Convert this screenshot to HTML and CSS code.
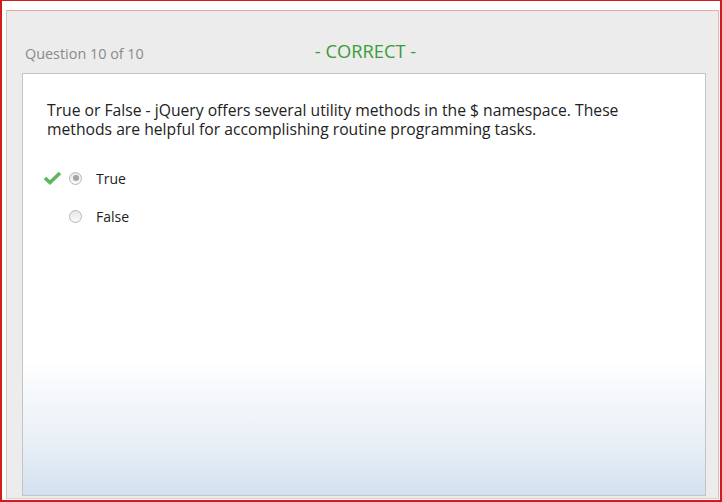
FILE: index.html
```html
<!DOCTYPE html>
<html>
<head>
<meta charset="utf-8">
<link rel="stylesheet" href="styles.css">
</head>
<body>
<div class="frame">
  <div class="panel">
    <div class="header">
      <span class="qnum">Question 10 of 10</span>
      <span class="result">- CORRECT -</span>
      <span></span>
    </div>
    <div class="card">
      <p class="question">True or False - jQuery offers several utility methods in the $ namespace. These methods are helpful for accomplishing routine programming tasks.</p>
      <div class="options">
        <div class="option">
          <svg class="check" width="19" height="14" viewBox="0 0 19 14"><path d="M2 7 L7 11.5 L17 2" fill="none" stroke="#5cb85c" stroke-width="3.6" stroke-linejoin="miter"/></svg>
          <span class="radio selected"></span>
          <span class="label">True</span>
        </div>
        <div class="option">
          <span class="check-slot"></span>
          <span class="radio"></span>
          <span class="label">False</span>
        </div>
      </div>
    </div>
  </div>
</div>
</body>
</html>
```
FILE: styles.css
```css
* { box-sizing: border-box; }
html, body { margin: 0; padding: 0; }
body { width: 722px; height: 502px; overflow: hidden; font-family: "Open Sans", "Noto Sans", sans-serif; }
.frame {
  width: 722px; height: 502px;
  background: #fff;
  border-top: 1px solid #d01c1c;
  border-left: 2px solid #d01c1c;
  border-right: 2px solid #d01c1c;
  border-bottom: 2px solid #d01c1c;
  padding: 9px 1px 1px 4px;
  display: flex;
}
.panel {
  flex: 1;
  background: #ececec;
  border-top: 1px solid #e8a8a8;
  border-left: 1px solid #c8c8c8;
  border-right: 1px solid #f0b4b4;
  border-bottom: 1px solid #f0c8c8;
  padding: 0 12px 2px 15px;
  display: flex;
  flex-direction: column;
}
.header {
  height: 62px;
  display: grid;
  grid-template-columns: 1fr auto 1fr;
  align-items: end;
  padding: 0 0 10px 3px;
}
.qnum { font-size: 14.4px; color: #8a8a8a; line-height: 18px; }
.result { font-size: 18.3px; color: #3a9c3a; line-height: 22px; position: relative; top: -1px; }
.card {
  flex: 1;
  border: 1px solid #c4c4c4;
  background: linear-gradient(to bottom, #fff 0%, #fff 68%, #f5f8fb 76%, #e8eff5 88%, #d2e1f1 100%);
  padding: 27px 24px 0 24px;
}
.question { margin: 0; font-size: 15.7px; line-height: 19px; color: #222; }
.options { margin: 29px 0 0 -4px; display: flex; flex-direction: column; gap: 18px; }
.option { display: flex; align-items: center; height: 20px; }
.check, .check-slot { width: 19px; height: 14px; flex: none; }
.radio {
  width: 13px; height: 13px; margin-left: 7px; flex: none;
  border-radius: 50%;
  border: 1px solid #b8b8b8;
  background: linear-gradient(#e6e6e6, #fafafa);
  display: flex; align-items: center; justify-content: center;
}
.radio.selected::after { content: ""; width: 6px; height: 6px; border-radius: 50%; background: #a4a4a4; }
.label { margin-left: 14px; font-size: 14px; color: #222; }
```
